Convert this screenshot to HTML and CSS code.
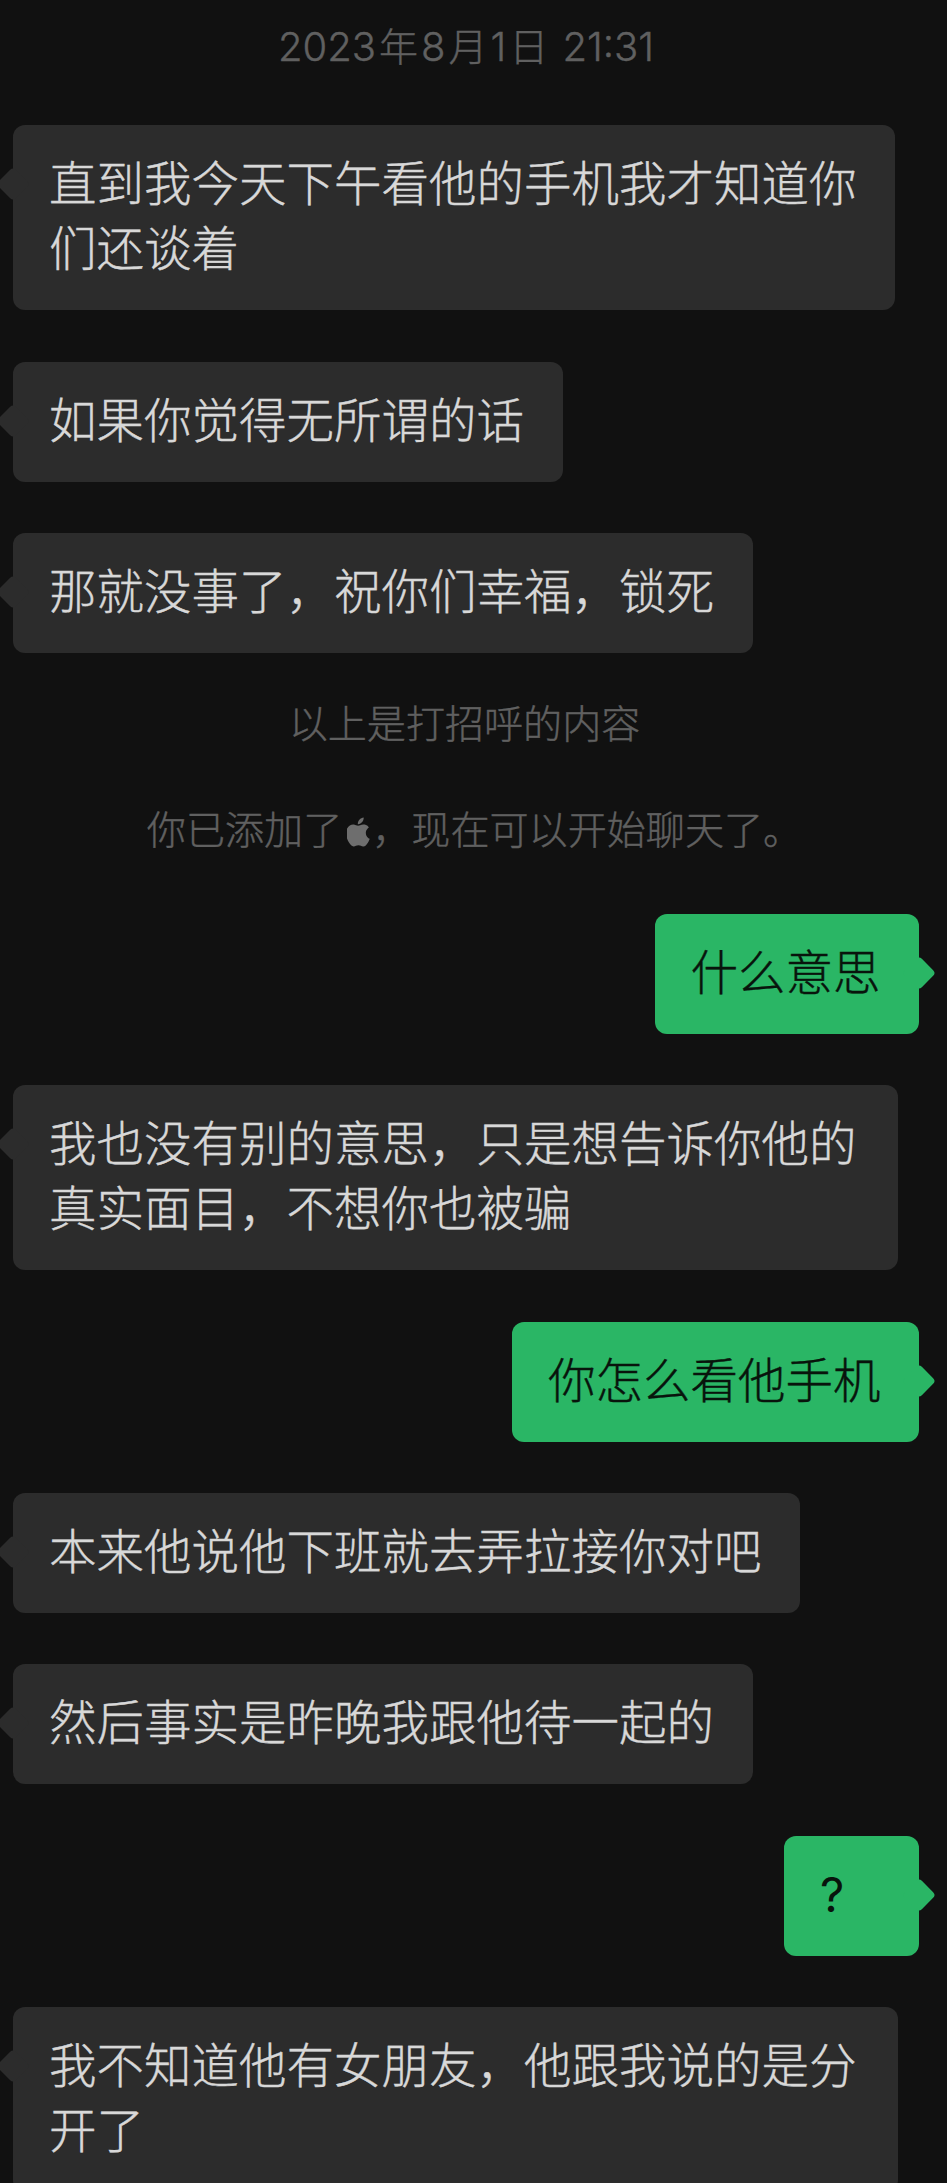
FILE: index.html
```html
<!DOCTYPE html>
<html lang="zh-CN">
<head>
<meta charset="utf-8">
<title>聊天记录</title>
<link rel="stylesheet" href="styles.css">
</head>
<body>
<main class="chat">
  <p class="time">2023<span class="time-cjk">年</span>8<span class="time-cjk">月</span>1<span class="time-cjk">日</span> 21:31</p>
  <div class="bubble in first">直到我今天下午看他的手机我才知道你<br>们还谈着</div>
  <div class="bubble in">如果你觉得无所谓的话</div>
  <div class="bubble in">那就没事了，祝你们幸福，锁死</div>
  <p class="sys sys-first">以上是打招呼的内容</p>
  <p class="sys sys-second">你已添加了<svg class="apple" viewBox="3 0 19 24" aria-hidden="true"><path d="M12.152 6.896c-.948 0-2.415-1.078-3.96-1.04-2.04.027-3.91 1.183-4.961 3.014-2.117 3.675-.546 9.103 1.519 12.09 1.013 1.454 2.208 3.09 3.792 3.039 1.52-.065 2.09-.987 3.935-.987 1.831 0 2.35.987 3.96.948 1.637-.026 2.676-1.48 3.676-2.948 1.156-1.688 1.636-3.325 1.662-3.415-.039-.013-3.182-1.221-3.22-4.857-.026-3.04 2.48-4.494 2.597-4.559-1.429-2.09-3.623-2.324-4.39-2.376-2-.156-3.675 1.09-4.61 1.09zM15.53 3.83c.843-1.012 1.4-2.427 1.245-3.83-1.207.052-2.662.805-3.532 1.818-.78.896-1.454 2.338-1.273 3.714 1.338.104 2.715-.688 3.559-1.701"/></svg>，现在可以开始聊天了。</p>
  <div class="bubble out after-sys">什么意思</div>
  <div class="bubble in wide">我也没有别的意思，只是想告诉你他的<br>真实面目，不想你也被骗</div>
  <div class="bubble out">你怎么看他手机</div>
  <div class="bubble in">本来他说他下班就去弄拉接你对吧</div>
  <div class="bubble in">然后事实是昨晚我跟他待一起的</div>
  <div class="bubble out short"><span class="latin">?</span></div>
  <div class="bubble in wide">我不知道他有女朋友，他跟我说的是分<br>开了</div>
</main>
</body>
</html>
```
FILE: styles.css
```css
html, body {
  margin: 0;
  height: 2183px;
  overflow: hidden;
  background: #111111;
}
body {
  font-family: "Noto Sans CJK SC", "Noto Sans", sans-serif;
  font-weight: 300;
  -webkit-text-stroke: 0.4px currentColor;
}
.chat {
  display: flex;
  flex-direction: column;
  padding: 19px 28px 0 13px;
}
.time, .sys {
  margin: 0;
  height: 50px;
  text-align: center;
  color: #606060;
  font-size: 39.1px;
  line-height: 50px;
  white-space: nowrap;
}
.time {
  font-family: Inter, "Noto Sans CJK SC", sans-serif;
  font-size: 40px;
}
.time-cjk {
  font-family: "Noto Sans CJK SC", sans-serif;
  font-size: 39px;
  margin: 0 3px;
}
.sys-first {
  margin-top: 43px;
  padding-right: 3px;
}
.sys-second {
  margin-top: 56px;
  padding-left: 17px;
}
.apple {
  width: 23px;
  height: 30px;
  fill: #6e6e6e;
  vertical-align: -3px;
  margin: 0 2px 0 5px;
}
.bubble {
  position: relative;
  width: fit-content;
  box-sizing: border-box;
  padding: 23px 38.5px 31.75px 36px;
  margin-top: 51.3px;
  border-radius: 12px;
  font-size: 47.5px;
  line-height: 65.25px;
  white-space: nowrap;
}
.bubble.first { margin-top: 56px; }
.bubble::before {
  content: "";
  position: absolute;
  top: 47px;
  width: 24px;
  height: 24px;
  border-radius: 4px;
  transform: rotate(45deg);
  background: inherit;
}
.in {
  align-self: flex-start;
  background: #2c2c2c;
  color: #d8d8d8;
}
.in::before { left: -12px; }
.out {
  align-self: flex-end;
  background: #2ab665;
  color: #08140c;
}
.out::before { right: -12px; }
.bubble.after-sys { margin-top: 62px; }
.short { min-width: 135px; }
.wide { min-width: 885px; }
.latin {
  font-family: Inter, "Liberation Sans", sans-serif;
  font-weight: 400;
  line-height: 0;
  -webkit-text-stroke: 0;
}
```
